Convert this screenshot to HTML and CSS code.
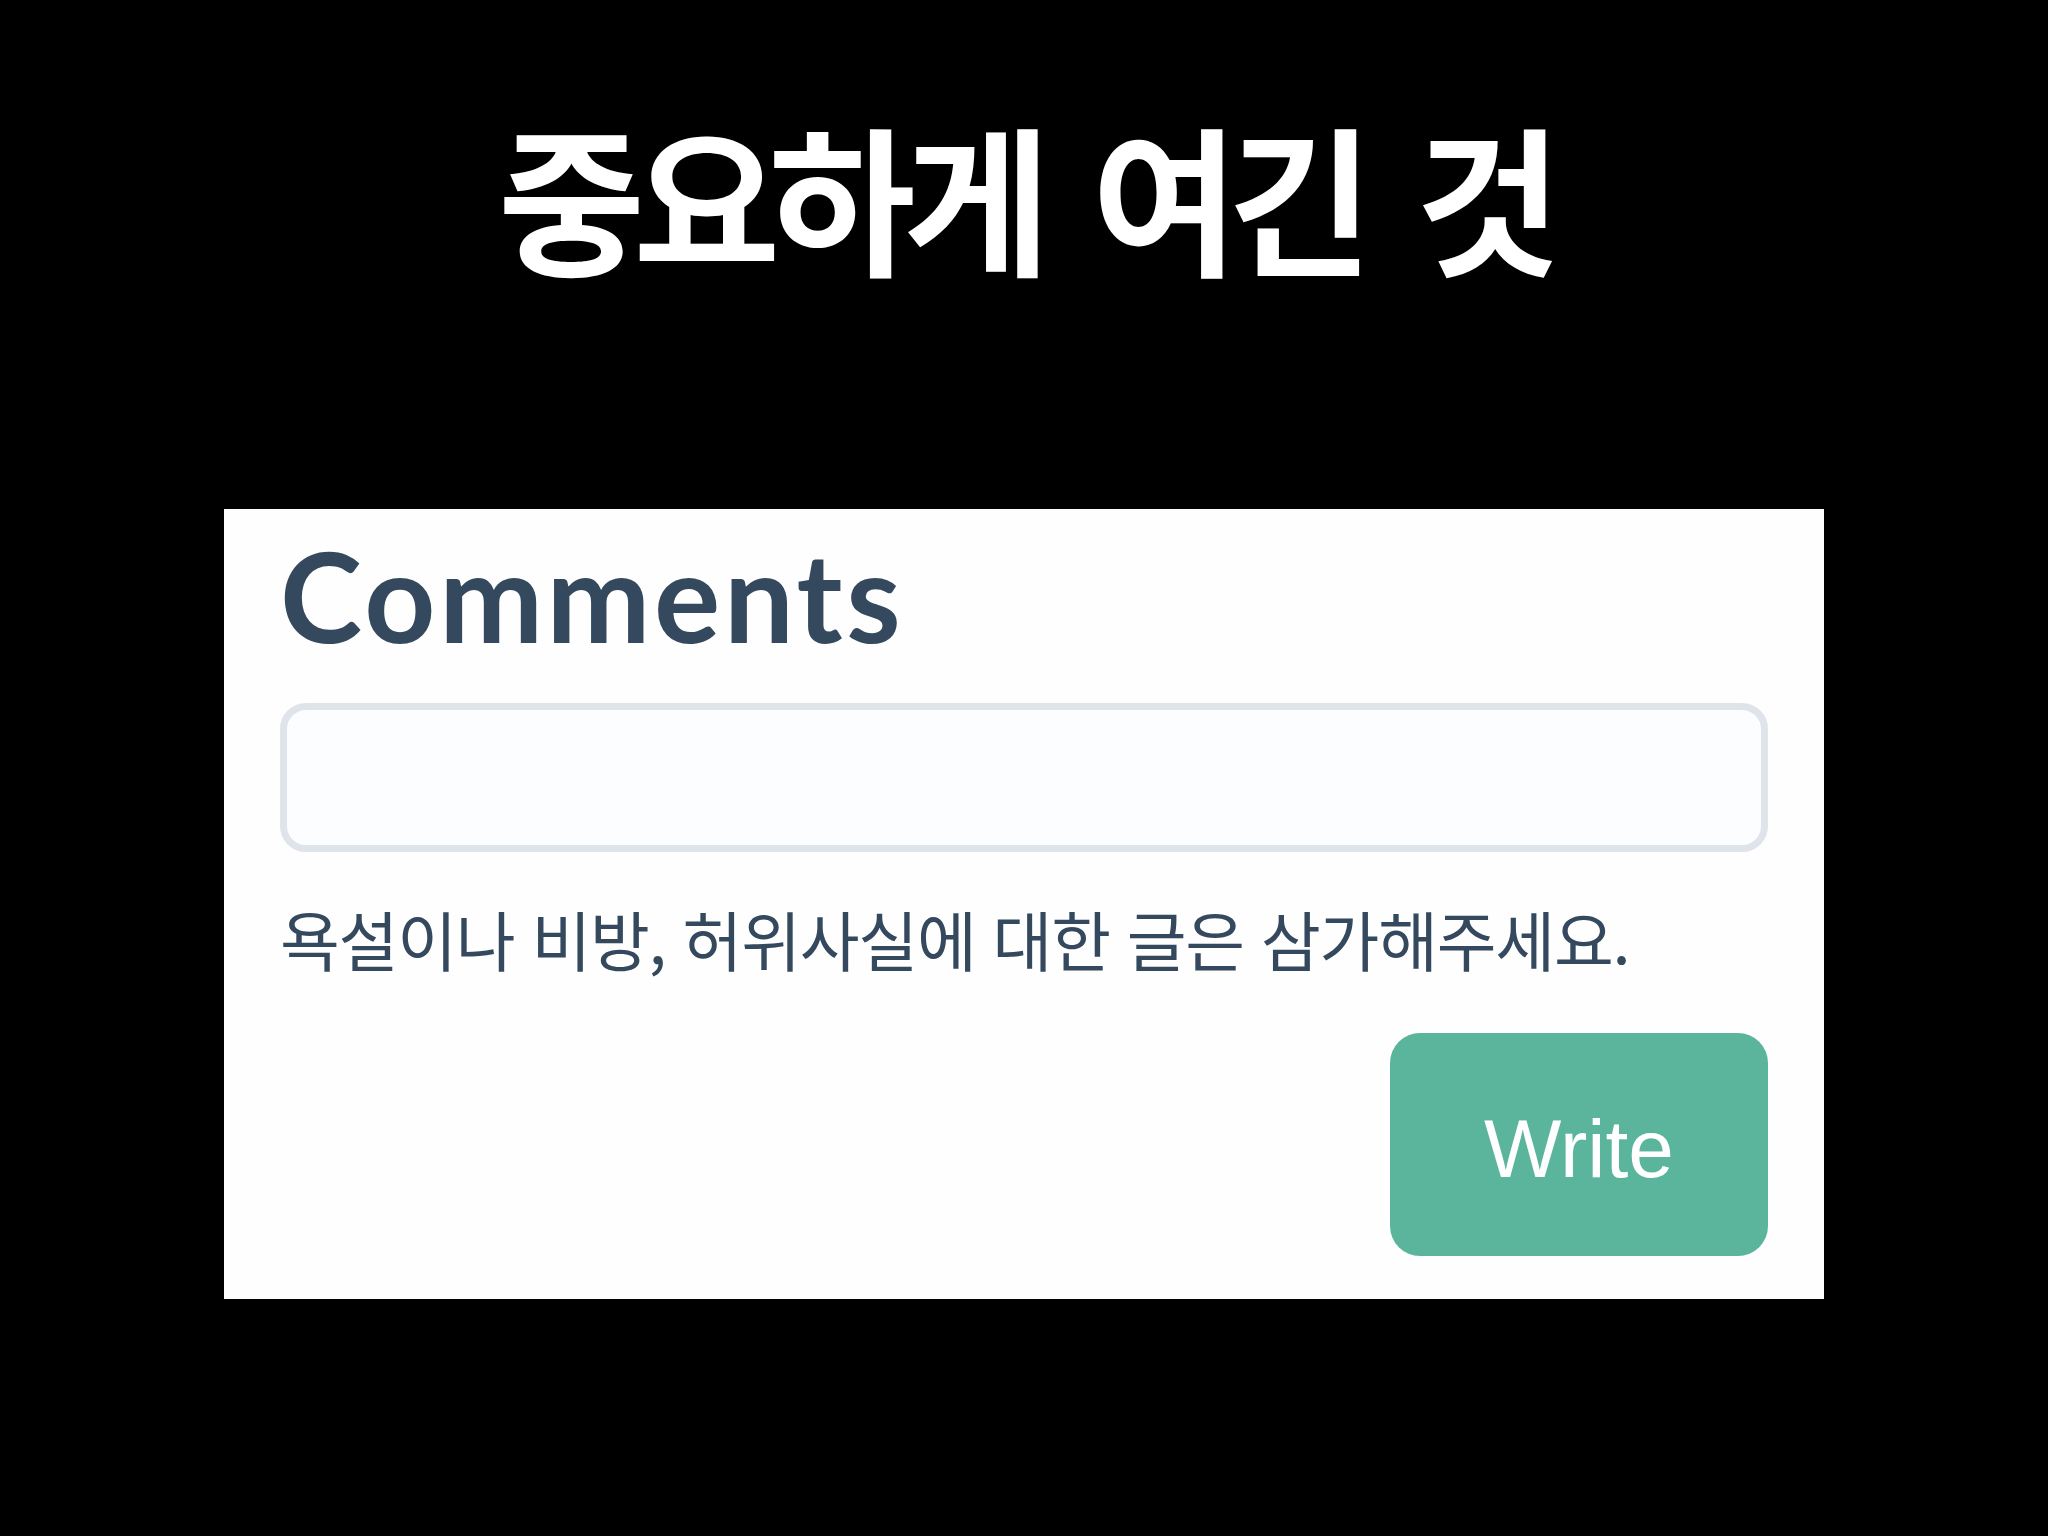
FILE: index.html
```html
<!DOCTYPE html>
<html lang="ko">
<head>
<meta charset="utf-8">
<title>중요하게 여긴 것</title>
<link rel="stylesheet" href="styles.css">
</head>
<body>
<main class="slide">
  <h1 class="slide-title">중요하게 여긴 것</h1>
  <section class="comments-card">
    <h2 class="comments-heading">Comments</h2>
    <div class="comment-input"></div>
    <p class="comment-note">욕설이나 비방, 허위사실에 대한 글은 삼가해주세요.</p>
    <div class="comment-actions">
      <button class="write-button" type="button">Write</button>
    </div>
  </section>
</main>
</body>
</html>
```

FILE: styles.css
```css
html, body {
  margin: 0;
  padding: 0;
  background: #000;
}

.slide {
  width: 2048px;
  height: 1536px;
  background: #000;
  display: flex;
  flex-direction: column;
  align-items: flex-start;
}

.slide-title {
  margin: 0;
  padding-top: 114px;
  width: 100%;
  text-align: center;
  color: #fff;
  font-family: "Noto Sans CJK KR", sans-serif;
  font-weight: 700;
  font-size: 160px;
  line-height: 1;
  letter-spacing: -12px;
  word-spacing: 20px;
}

.comments-card {
  box-sizing: border-box;
  margin-top: 235px;
  margin-left: 224px;
  width: 1600px;
  height: 790px;
  background: #fefefe;
  padding: 24px 56px 0 56px;
  display: flex;
  flex-direction: column;
}

.comments-heading {
  margin: 0;
  font-family: Lato, "Noto Sans", sans-serif;
  font-weight: 700;
  font-size: 124px;
  line-height: 1;
  letter-spacing: 3.6px;
  color: #35495e;
}

.comment-input {
  box-sizing: border-box;
  margin-top: 46px;
  height: 149px;
  border: 7px solid #dfe3ea;
  border-radius: 26px;
  background: #fcfdfe;
}

.comment-note {
  margin: 54px 0 0 0;
  font-family: "Noto Sans CJK KR", sans-serif;
  font-weight: 400;
  font-size: 65px;
  line-height: 1;
  letter-spacing: -1.2px;
  color: #35495e;
}

.comment-actions {
  display: flex;
  justify-content: flex-end;
  margin-top: 62px;
}

.write-button {
  box-sizing: border-box;
  width: 378px;
  height: 223px;
  border: none;
  border-radius: 30px;
  background: #5ab59c;
  color: #fff;
  font-family: "Liberation Sans", Arial, sans-serif;
  font-size: 82px;
  line-height: 1;
  padding: 8px 0 0 0;
}
```
